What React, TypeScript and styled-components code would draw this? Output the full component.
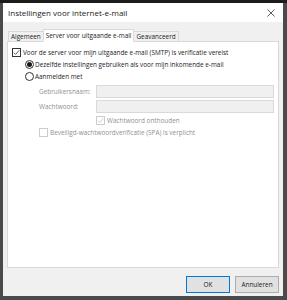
import React from 'react'
import styled, { createGlobalStyle } from 'styled-components'

const GlobalStyle = createGlobalStyle`
  html, body {
    margin: 0;
    padding: 0;
    background: #2a2a2a;
  }
  * {
    box-sizing: border-box;
  }
`

const Frame = styled.div`
  width: 287px;
  height: 300px;
  padding: 3px 4px 4px 3px;
  background: linear-gradient(#1c1c1c 0, #1c1c1c 3px, #4a4a4a 3px);
  font-family: 'Open Sans', 'Noto Sans', sans-serif;
`

const Window = styled.div`
  height: 100%;
  background: #f0f0f0;
  display: flex;
  flex-direction: column;
`

const TitleBar = styled.div`
  height: 19px;
  background: #fff;
  display: flex;
  align-items: center;
  justify-content: space-between;
  padding: 0 8px 0 5px;
  font-size: 8px;
  color: #1a1a1a;
`

const Close = styled.svg`
  width: 8px;
  height: 8px;
`

const Body = styled.div`
  flex: 1;
  display: flex;
  flex-direction: column;
  padding: 6px 4px 0 4px;
`

const Tabs = styled.div`
  display: flex;
  align-items: flex-end;
  padding-left: 2px;
  height: 13px;
`

const Tab = styled.div<{ $active?: boolean }>`
  height: ${p => (p.$active ? 13 : 11)}px;
  padding: 0 2px;
  display: flex;
  align-items: center;
  font-size: 6.4px;
  color: #1a1a1a;
  background: ${p => (p.$active ? '#fff' : '#f0f0f0')};
  border: 1px solid #d9d9d9;
  border-bottom: ${p => (p.$active ? '1px solid #fff' : '1px solid #d9d9d9')};
  margin-left: -1px;
  position: relative;
  z-index: ${p => (p.$active ? 2 : 1)};
  margin-bottom: -1px;
`

const Panel = styled.div`
  height: 227px;
  background: #fff;
  border: 1px solid #d9d9d9;
  padding: 4px 4px 0 4px;
  display: flex;
  flex-direction: column;
  font-size: 6.4px;
  color: #1a1a1a;
`

const Row = styled.div<{ $indent?: number; $h?: number; $muted?: boolean }>`
  display: flex;
  align-items: center;
  height: ${p => p.$h ?? 12}px;
  padding-left: ${p => p.$indent ?? 0}px;
  color: ${p => (p.$muted ? '#909090' : '#1a1a1a')};
`

const Box = styled.span<{ $disabled?: boolean }>`
  width: 9px;
  height: 9px;
  border: 1px solid ${p => (p.$disabled ? '#cccccc' : '#333')};
  background: #fff;
  display: inline-flex;
  align-items: center;
  justify-content: center;
  margin-right: 2px;
  flex-shrink: 0;
`

const Radio = styled.span<{ $on?: boolean }>`
  width: 9px;
  height: 9px;
  border-radius: 50%;
  border: 1px solid #333;
  display: inline-flex;
  align-items: center;
  justify-content: center;
  margin-right: 1px;
  flex-shrink: 0;
  &::after {
    content: '';
    width: 5px;
    height: 5px;
    border-radius: 50%;
    background: ${p => (p.$on ? '#1a1a1a' : 'transparent')};
  }
`

const Field = styled.div`
  display: grid;
  grid-template-columns: 57px 1fr;
  align-items: center;
  height: 15px;
  padding-left: 27px;
  color: #909090;
`

const Input = styled.div`
  height: 13px;
  background: #f0f0f0;
  border: 1px solid #d9d9d9;
`

const Footer = styled.div`
  display: flex;
  justify-content: flex-end;
  gap: 5px;
  padding: 8px 0 0 0;
`

const Button = styled.div<{ $default?: boolean }>`
  width: 44px;
  height: 17px;
  display: flex;
  align-items: center;
  justify-content: center;
  font-size: 6.4px;
  color: #1a1a1a;
  background: #e1e1e1;
  border: 1px solid ${p => (p.$default ? '#0078d7' : '#adadad')};
`

const Check = ({ color = '#333' }: { color?: string }) => (
  <svg width="7" height="7" viewBox="0 0 8 8">
    <path d="M1 4.2 L3 6.2 L7 1.5" fill="none" stroke={color} strokeWidth="0.9" />
  </svg>
)

export default function App() {
  return (
    <>
      <GlobalStyle />
      <Frame>
        <Window>
          <TitleBar>
            <span>Instellingen voor internet-e-mail</span>
            <Close viewBox="0 0 8 8">
              <path d="M0.5 0.5 L7.5 7.5 M7.5 0.5 L0.5 7.5" stroke="#333" strokeWidth="0.8" />
            </Close>
          </TitleBar>
          <Body>
            <Tabs>
              <Tab>Algemeen</Tab>
              <Tab $active>Server voor uitgaande e-mail</Tab>
              <Tab>Geavanceerd</Tab>
            </Tabs>
            <Panel>
              <Row>
                <Box>
                  <Check />
                </Box>
                Voor de server voor mijn uitgaande e-mail (SMTP) is verificatie vereist
              </Row>
              <Row $indent={13}>
                <Radio $on />
                Dezelfde instellingen gebruiken als voor mijn inkomende e-mail
              </Row>
              <Row $indent={13}>
                <Radio />
                Aanmelden met
              </Row>
              <Field style={{ marginTop: 2 }}>
                <span>Gebruikersnaam:</span>
                <Input />
              </Field>
              <Field>
                <span>Wachtwoord:</span>
                <Input />
              </Field>
              <Row $indent={84} $muted>
                <Box $disabled>
                  <Check color="#c0c0c0" />
                </Box>
                Wachtwoord onthouden
              </Row>
              <Row $indent={27} $muted>
                <Box $disabled />
                Beveiligd-wachtwoordverificatie (SPA) is verplicht
              </Row>
            </Panel>
            <Footer>
              <Button $default>OK</Button>
              <Button>Annuleren</Button>
            </Footer>
          </Body>
        </Window>
      </Frame>
    </>
  )
}
